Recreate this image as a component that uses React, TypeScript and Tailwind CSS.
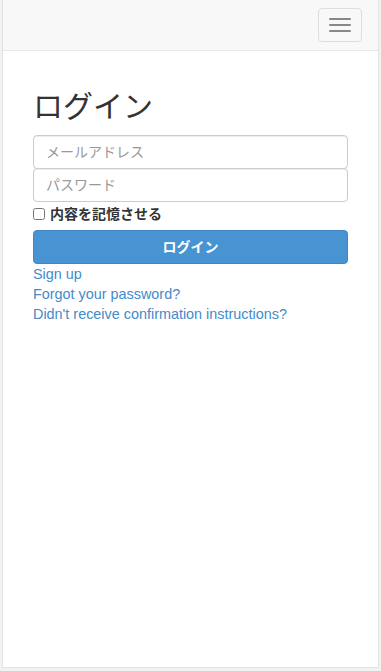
export default function App() {
  return (
    <div
      className="flex h-[671px] flex-col bg-[#f2f2f2] px-[2px] pb-[3px] text-[14px] text-[#333]"
      style={{ fontFamily: '"Liberation Sans", "Noto Sans CJK JP", sans-serif' }}
    >
      <div className="flex flex-1 flex-col border border-t-0 border-[#e3e3e3] bg-white">
        {/* Navbar */}
        <nav className="flex h-[51px] items-center justify-end border-b border-[#e7e7e7] bg-[#f8f8f8] pr-[16px]">
          <button className="flex h-[34px] w-[44px] flex-col items-center justify-center gap-[4px] rounded-[4px] border border-[#ddd]">
            <span className="block h-[2px] w-[22px] rounded-[1px] bg-[#888]" />
            <span className="block h-[2px] w-[22px] rounded-[1px] bg-[#888]" />
            <span className="block h-[2px] w-[22px] rounded-[1px] bg-[#888]" />
          </button>
        </nav>

        {/* Login form */}
        <div className="px-[30px] pt-[39px]">
          <h2 className="mb-[12px] text-[30px] leading-[33px] font-normal">ログイン</h2>
          <div className="flex flex-col">
            <input
              type="email"
              placeholder="メールアドレス"
              className="h-[34px] w-full rounded-[4px] border border-[#ccc] px-[12px] text-[14px] placeholder:text-[#999] shadow-[inset_0_1px_1px_rgba(0,0,0,0.075)]"
            />
            <input
              type="password"
              placeholder="パスワード"
              className="-mt-px h-[34px] w-full rounded-[4px] border border-[#ccc] px-[12px] text-[14px] placeholder:text-[#999] shadow-[inset_0_1px_1px_rgba(0,0,0,0.075)]"
            />
          </div>
          <label className="mt-[2px] flex h-[20px] items-center gap-[5px] font-bold">
            <input type="checkbox" className="m-0 h-[12px] w-[12px]" />
            内容を記憶させる
          </label>
          <button className="mt-[6px] h-[34px] w-full rounded-[4px] border border-[#3f86c4] bg-[#4894d2] font-bold text-white">
            ログイン
          </button>
          <div className="flex flex-col text-[14.4px] leading-[20px] text-[#428bca]">
            <a href="#">Sign up</a>
            <a href="#">Forgot your password?</a>
            <a href="#">Didn't receive confirmation instructions?</a>
          </div>
        </div>
      </div>
    </div>
  );
}
